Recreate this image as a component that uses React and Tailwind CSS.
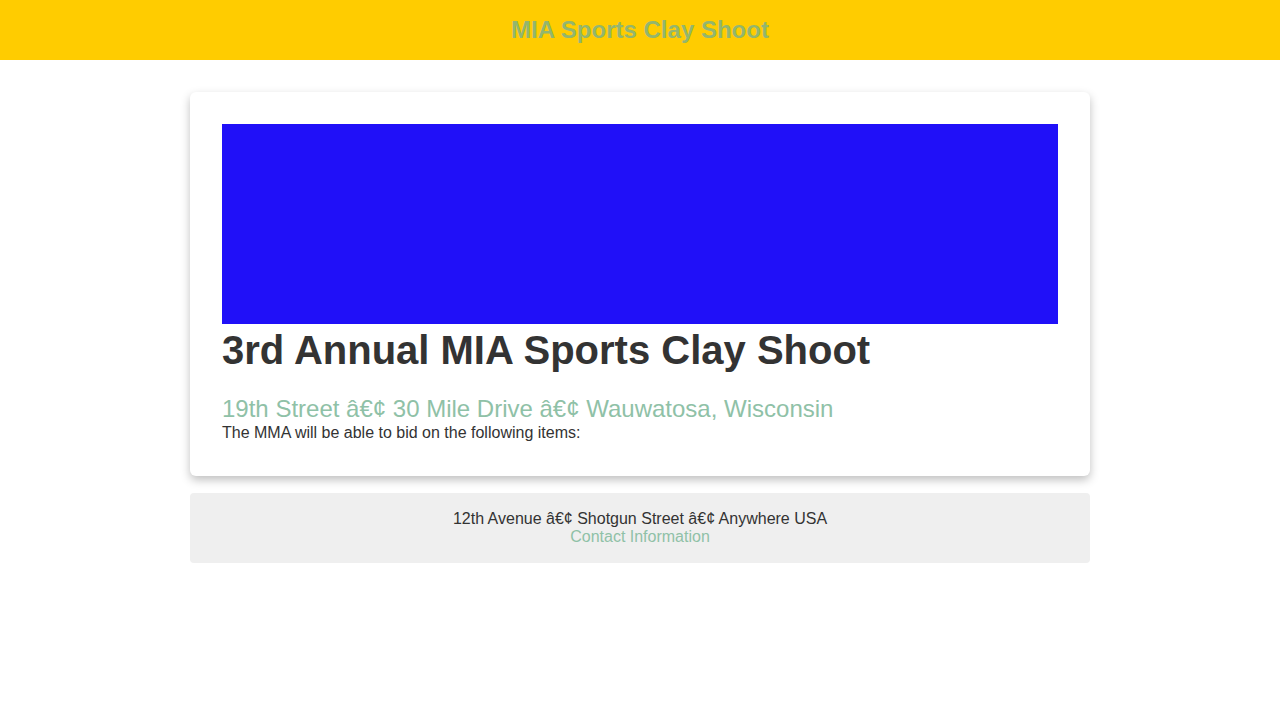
export default function App() {
  return (
    <div className="min-h-screen bg-white text-[#333] font-['Liberation_Sans',Arial,sans-serif]">
      <header className="h-[60px] bg-[#ffcc00] flex items-center justify-center">
        <h1 className="text-[24px] font-bold text-[#93b66e] leading-none">MIA Sports Clay Shoot</h1>
      </header>

      <main className="w-[900px] mx-auto pt-8">
        <section className="rounded-md bg-white shadow-[0_4px_10px_rgba(0,0,0,0.25)] px-8 pt-8 pb-[33px]">
          <div className="h-[200px] bg-[#2010f8]"></div>
          <h2 className="text-[40px] font-bold leading-[53px] text-[#333]">3rd Annual MIA Sports Clay Shoot</h2>
          <h3 className="mt-[18px] text-[24px] leading-[28px] text-[#8fc1a7]">
            19th Street â€¢ 30 Mile Drive â€¢ Wauwatosa, Wisconsin
          </h3>
          <p className="text-[16px] leading-[20px]">The MMA will be able to bid on the following items:</p>
        </section>

        <footer className="mt-[17px] bg-[#efefef] rounded-sm pt-[17px] pb-[17px] text-center text-[16px] leading-[18px]">
          <div>12th Avenue â€¢ Shotgun Street â€¢ Anywhere USA</div>
          <a className="text-[#8fc1a7]">Contact Information</a>
        </footer>
      </main>
    </div>
  )
}
